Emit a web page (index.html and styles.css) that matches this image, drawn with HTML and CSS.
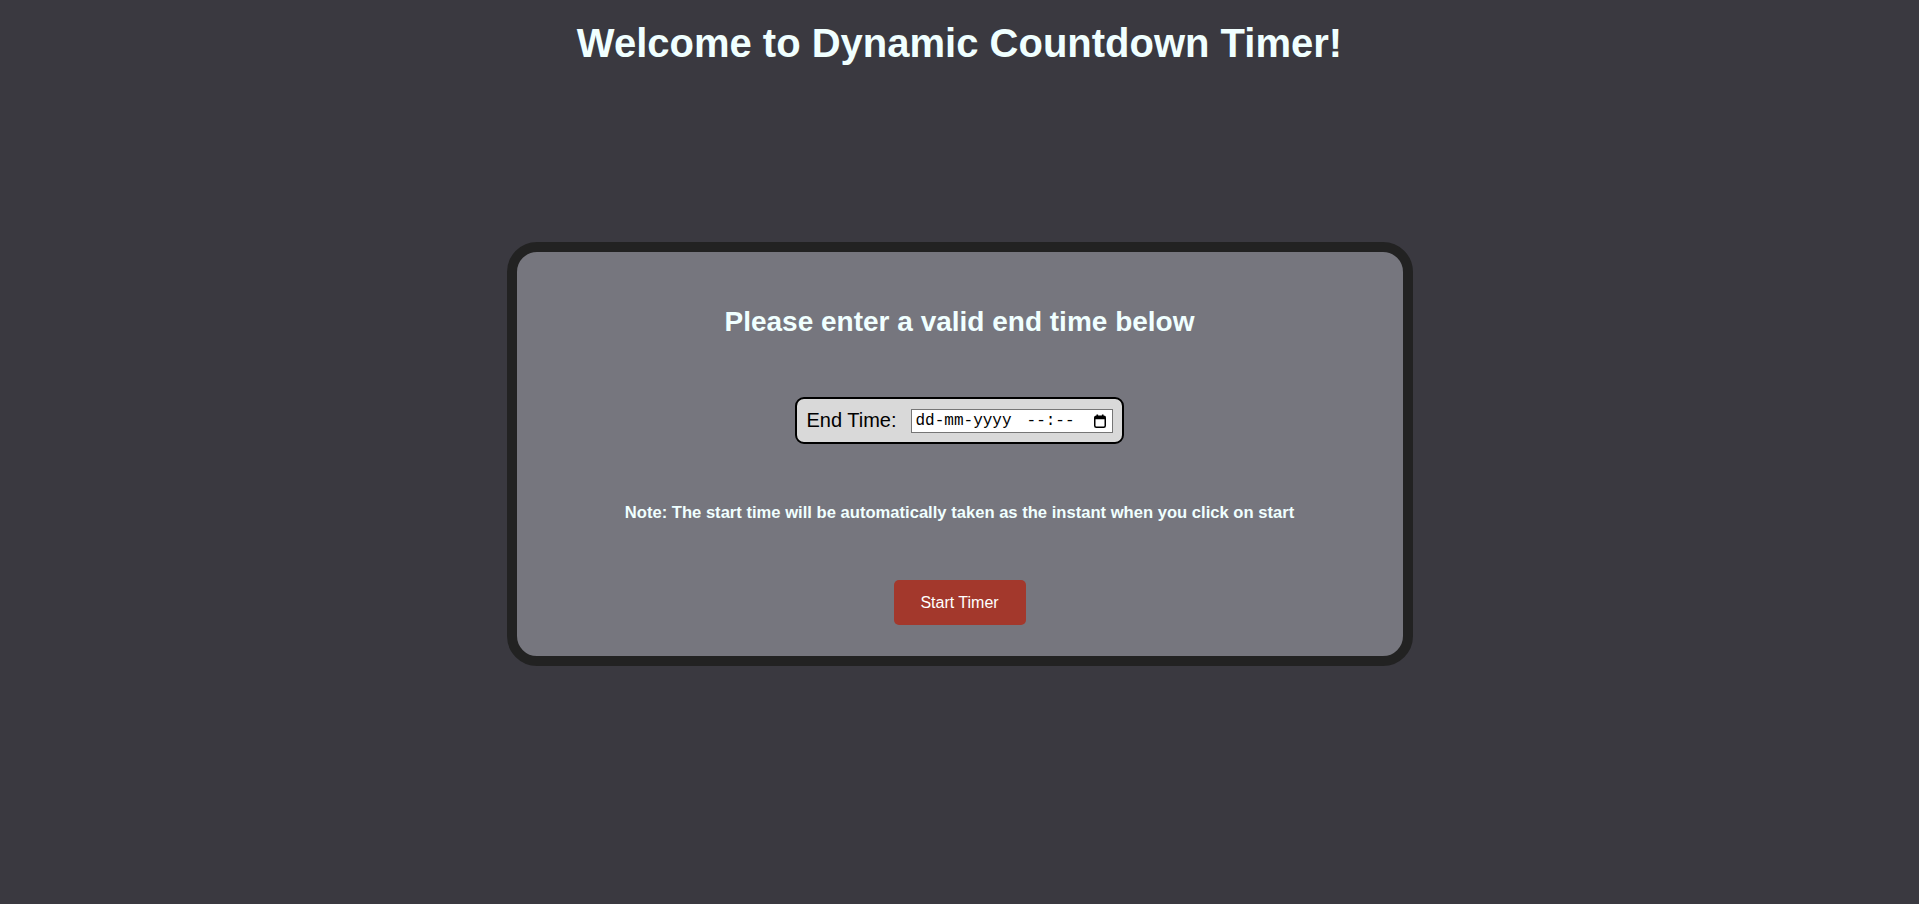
FILE: index.html
```html
<!DOCTYPE html>
<html lang="en">
<head>
<meta charset="utf-8">
<title>Dynamic Countdown Timer</title>
<link rel="stylesheet" href="styles.css">
</head>
<body>
<div class="page">
  <header class="top">
    <h1 class="title">Welcome to Dynamic Countdown Timer!</h1>
  </header>
  <main class="center">
    <section class="card">
      <h2 class="card-heading">Please enter a valid end time below</h2>
      <div class="field">
        <label class="field-label" for="end">End Time:</label>
        <div class="date-input" id="end" role="textbox" tabindex="0">
          <span class="date-part">dd-mm-yyyy</span>
          <span class="time-part">--:--</span>
          <svg class="cal-icon" width="12" height="14" viewBox="0 0 12 14" aria-hidden="true">
            <rect x="0.75" y="2.25" width="10.5" height="11" rx="1.5" fill="none" stroke="#000" stroke-width="1.5"/>
            <rect x="0.75" y="2.25" width="10.5" height="3" fill="#000"/>
            <rect x="2.5" y="0.5" width="1.6" height="2.5" fill="#000"/>
            <rect x="7.9" y="0.5" width="1.6" height="2.5" fill="#000"/>
          </svg>
        </div>
      </div>
      <p class="note">Note: The start time will be automatically taken as the instant when you click on start</p>
      <button class="start-btn" type="button">Start Timer</button>
    </section>
  </main>
  <div class="bottom"></div>
</div>
</body>
</html>
```
FILE: styles.css
```css
html, body {
  margin: 0;
  padding: 0;
  background: #3a3940;
  font-family: "Liberation Sans", Arial, sans-serif;
}

.page {
  height: 100vh;
  display: grid;
  grid-template-rows: 88px 1fr 84px;
}

.top {
  display: flex;
  justify-content: center;
}

.title {
  margin: 0;
  padding-top: 20px;
  font-size: 40px;
  line-height: 46px;
  font-weight: bold;
  color: #f0ffff;
}

.center {
  display: flex;
  align-items: center;
  justify-content: center;
}

.card {
  box-sizing: border-box;
  width: 906px;
  height: 424px;
  background: #76767e;
  border: 10px solid #222222;
  border-radius: 30px;
  display: flex;
  flex-direction: column;
  align-items: center;
  padding-top: 56px;
}

.card-heading {
  margin: 0;
  font-size: 28px;
  line-height: 28px;
  font-weight: bold;
  color: #f0ffff;
}

.field {
  margin-top: 61px;
  box-sizing: border-box;
  height: 47px;
  display: flex;
  align-items: center;
  gap: 14px;
  padding: 0 9px;
  background: #d9d9d9;
  border: 2px solid #000;
  border-radius: 9px;
}

.field-label {
  font-size: 20px;
  color: #000;
}

.date-input {
  box-sizing: border-box;
  width: 202px;
  height: 24px;
  display: flex;
  align-items: center;
  padding: 0 6px 0 4px;
  font-family: "Liberation Mono", "DejaVu Sans Mono", monospace;
  font-size: 16px;
  line-height: 18px;
  background: #fff;
  color: #000;
  border: 1px solid #767676;
}

.time-part {
  margin-left: 15px;
}

.cal-icon {
  margin-left: auto;
  display: block;
}

.note {
  margin: 60px 0 0;
  font-size: 16.6px;
  line-height: 18px;
  font-weight: bold;
  color: #f0ffff;
}

.start-btn {
  margin-top: 58px;
  width: 132px;
  height: 45px;
  border: none;
  border-radius: 5px;
  background: #a3382c;
  color: #ffffff;
  font-family: "Liberation Sans", Arial, sans-serif;
  font-size: 16px;
}
```
